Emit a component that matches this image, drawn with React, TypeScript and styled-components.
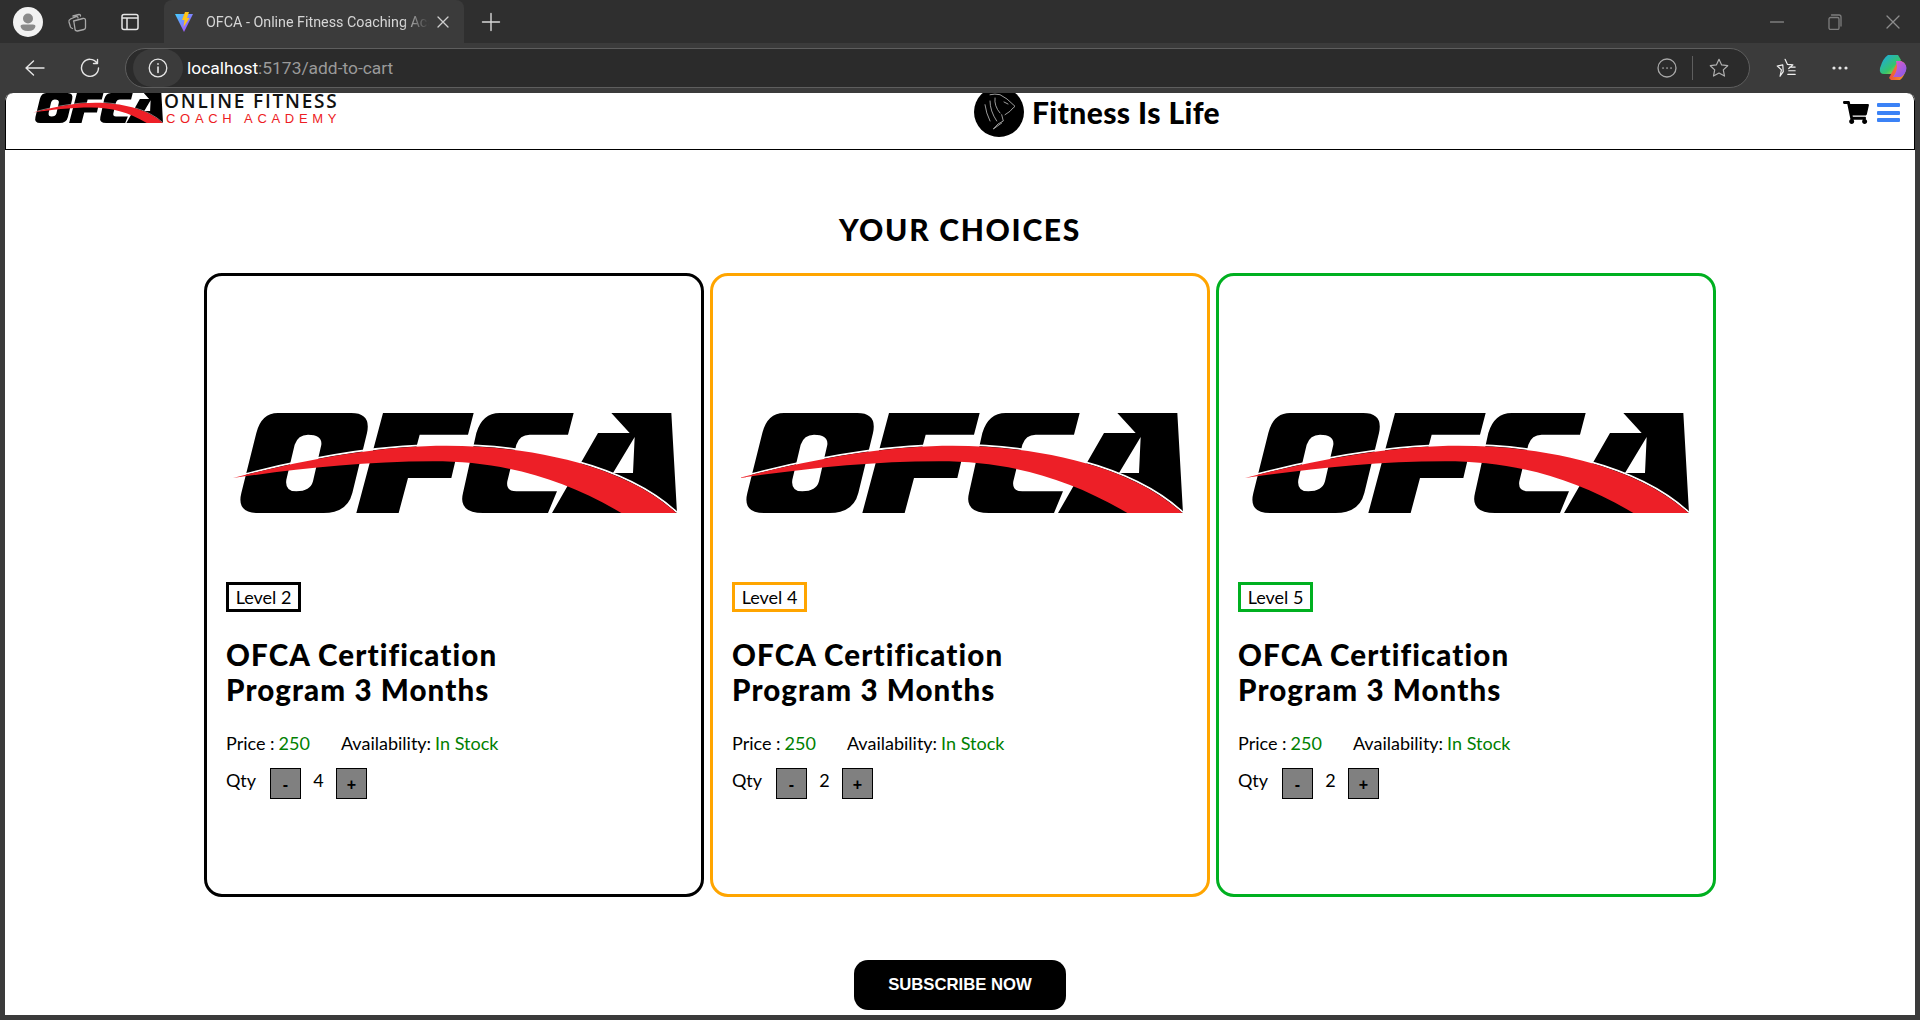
import React from "react";
import styled, { createGlobalStyle } from "styled-components";
import { FaShoppingCart } from "react-icons/fa";

const Global = createGlobalStyle`
  html, body { margin: 0; padding: 0; background: #3b3b3b; }
  body { width: 1920px; height: 1020px; overflow: hidden; font-family: "Lato", "Liberation Sans", sans-serif; }
`;

const Window = styled.div`
  width: 1920px; height: 1020px; display: flex; flex-direction: column; background: #3b3b3b; overflow: hidden;
`;
const TabStrip = styled.div`
  height: 43px; background: #2f2f2f; display: flex; align-items: center; flex: none; color: #d8d8d8;
`;
const Avatar = styled.div`
  width: 30px; height: 30px; border-radius: 50%; background: #f2f2f2; margin-left: 13px; display: flex; align-items: center; justify-content: center;
`;
const StripIcon = styled.div<{ $ml: number }>`
  margin-left: ${(p) => p.$ml}px; display: flex; align-items: center;
`;
const Tab = styled.div`
  margin-left: 24px; width: 300px; height: 43px; background: #3b3b3b; border-radius: 8px 8px 0 0; display: flex; align-items: center; padding: 0 10px; box-sizing: border-box;
`;
const TabTitle = styled.div`
  font-family: "Roboto", "Liberation Sans", sans-serif; font-size: 14.3px; color: #d6d6d6; margin-left: 12px; width: 223px; white-space: nowrap; overflow: hidden;
  mask-image: linear-gradient(to right, #000 88%, transparent 100%);
`;
const Spacer = styled.div`
  flex: 1;
`;
const WinButtons = styled.div`
  display: flex; align-items: center; gap: 44px; margin-right: 20px;
`;
const Toolbar = styled.div`
  height: 50px; flex: none; box-sizing: border-box; padding-bottom: 1px; display: flex; align-items: center; background: #3b3b3b;
`;
const NavIcon = styled.div<{ $ml: number }>`
  margin-left: ${(p) => p.$ml}px; display: flex; align-items: center;
`;
const AddressBar = styled.div`
  margin-left: 25px; width: 1625px; height: 40px; box-sizing: border-box; border: 1px solid #5e5e5e; border-radius: 20px; background: #2b2b2b; display: flex; align-items: center; padding-left: 7px;
`;
const InfoPill = styled.div`
  width: 50px; height: 38px; border-radius: 19px; background: #3b3b3b; display: flex; align-items: center; justify-content: center;
`;
const Url = styled.div`
  font-family: "Roboto", "Liberation Sans", sans-serif; font-size: 17.4px; color: #fff; margin-left: 4px;
  span { color: #9a9a9a; }
`;
const BarDivider = styled.div`
  width: 1px; height: 24px; background: #5e5e5e; margin: 0 15px;
`;
const BarEnd = styled.div`
  margin-left: auto; margin-right: 19px; display: flex; align-items: center;
`;

const Page = styled.div`
  width: 1910px; margin-left: 5px; height: 922px; flex: none; background: #fff; border-radius: 8px 8px 0 0; overflow: hidden; display: flex; flex-direction: column; position: relative;
`;
const Header = styled.header`
  height: 57px; flex: none; box-sizing: border-box; border: 1px solid #000; border-top: 0; border-radius: 8px 8px 0 0; display: flex; align-items: flex-start; position: relative; overflow: hidden;
`;
const Brand = styled.div`
  margin-left: 27px; display: flex; align-items: flex-start;
`;
const BrandText = styled.div`
  margin-left: 1px; display: flex; flex-direction: column;
`;
const BrandTop = styled.div`
  font-family: "Open Sans", "Liberation Sans", sans-serif; font-size: 19px; font-weight: 600; line-height: 16px; letter-spacing: 1.8px; color: #111; white-space: nowrap;
`;
const BrandBottom = styled.div`
  font-family: "Liberation Sans", sans-serif; font-size: 13px; line-height: 13px; letter-spacing: 4.7px; color: #ed1c24; white-space: nowrap; margin: 3px 0 0 2px;
`;
const Motto = styled.div`
  position: absolute; left: 968px; top: -6px; display: flex; align-items: center;
`;
const Badge = styled.div`
  width: 50px; height: 50px; border-radius: 50%; background: #000; display: flex; align-items: center; justify-content: center;
`;
const MottoText = styled.div`
  font-size: 30px; font-weight: 900; letter-spacing: 0.4px; color: #000; margin-left: 8px; line-height: 50px; white-space: nowrap;
`;
const HeaderIcons = styled.div`
  position: absolute; right: 14px; top: 8px; display: flex; align-items: center; gap: 8px;
`;
const Cart = styled(FaShoppingCart)`
  width: 26px; height: 23px; color: #000; display: block;
`;
const BurgerBox = styled.div`
  width: 23px; height: 19px; display: flex; flex-direction: column; justify-content: space-between;
`;
const BurgerBar = styled.span`
  display: block; height: 4px; border-radius: 1px; background: #3b82f6;
`;

const Main = styled.main`
  flex: 1; display: flex; flex-direction: column; align-items: center;
`;
const Heading = styled.h1`
  margin: 61px 0 0; font-size: 30px; line-height: 36px; font-weight: 900; color: #000; letter-spacing: 1.7px;
`;
const Cards = styled.div`
  margin-top: 26px; display: grid; grid-template-columns: repeat(3, 500px); gap: 6px;
`;
const Card = styled.article<{ $c: string }>`
  height: 624px; box-sizing: border-box; border: 3px solid ${(p) => p.$c}; border-radius: 18px; padding: 137px 19px 0;
`;
const LogoWrap = styled.div`
  height: 100px; margin-left: 7px;
`;
const Level = styled.div<{ $c: string }>`
  margin-top: 69px; width: 75px; height: 30px; box-sizing: border-box; border: 3px solid ${(p) => p.$c}; font-size: 18px; line-height: 24px; text-align: center; color: #000;
`;
const Title = styled.h2`
  margin: 25px 0 0; font-size: 29.5px; line-height: 35px; font-weight: 900; letter-spacing: 1.1px; color: #000;
`;
const Info = styled.div`
  margin-top: 24px; font-size: 18px; line-height: 24px; color: #000; display: flex; white-space: nowrap;
`;
const Green = styled.span`
  color: #008000; margin-left: 4px;
`;
const Avail = styled.span`
  margin-left: 31px;
`;
const QtyRow = styled.div`
  margin-top: 13px; display: flex; align-items: flex-start; font-size: 18px; line-height: 24px; color: #000;
`;
const QtyLabel = styled.span`
  width: 44px;
`;
const QtyBtn = styled.button`
  width: 31px; height: 31px; box-sizing: border-box; background: #808080; border: 1px solid #000; padding: 2px 0 0; font-family: "Liberation Sans", sans-serif; font-weight: 700; font-size: 16px; color: #000; display: flex; align-items: center; justify-content: center;
`;
const QtyVal = styled.span`
  width: 35px; text-align: center;
`;
const Subscribe = styled.button`
  margin-top: 63px; width: 212px; height: 50px; border: 0; border-radius: 14px; background: #000; color: #fff; font-family: "Liberation Sans", sans-serif; font-weight: 700; font-size: 16.7px;
`;

const Ofca = ({ w, h }: { w: number; h: number }) => (
  <svg width={w} height={h} viewBox="100 70 1332 300" preserveAspectRatio="none" style={{ display: "block" }}>
    <path fillRule="evenodd" fill="#000" d="M235 70 L455 70 Q515 70 502 130 L458 310 Q443 370 372 370 L175 370 Q110 370 125 310 L170 130 Q185 70 235 70 Z M325 135 Q368 135 365 165 L340 275 Q332 305 290 305 Q255 305 260 270 L285 165 Q295 135 325 135 Z" />
    <path fill="#000" d="M550 70 L822 70 L805 135 L660 135 L648 180 L775 180 L755 265 L625 265 L597 370 L470 370 Z" />
    <path fill="#000" d="M900 70 L1122 70 L1105 135 L990 135 Q960 135 950 165 L923 275 Q918 305 950 305 L1072 305 L1045 370 L850 370 Q775 370 790 310 L830 130 Q848 70 900 70 Z" />
    <path fillRule="evenodd" fill="#000" d="M1235 70 L1415 70 L1432 370 L1057 370 L1195 130 L1290 130 Z M1305 142 L1300 250 L1240 250 Z" />
    <path fill="none" stroke="#fff" strokeWidth="5" d="M130 255 C350 198 560 165 740 165 C1000 165 1280 227 1432 368" />
    <path fill="#ed1f27" d="M100 265 C350 200 560 168 740 168 C1000 168 1280 230 1430 370 L1265 370 C1080 260 900 215 700 215 C480 215 280 240 100 265 Z" />
  </svg>
);

const Lion = () => (
  <svg width="50" height="50" viewBox="0 0 50 50" fill="none" stroke="#c4c4c4" strokeWidth="0.8" strokeLinecap="round" strokeLinejoin="round">
    <path d="M16 7.7 Q21 6.5 26 7.7 L33 12 L41 19.3 L38 22 L36 24.3 L31 27.7" />
    <path d="M11 17.7 Q12 26 16 34 M16 14 Q16 24 22.7 34 M21 11 Q20 19 26 26" />
    <path d="M27.7 27.7 L29.3 34 L24 37 L19.3 42 L27.7 36" />
    <path d="M30 15 L34 17" />
  </svg>
);

const cards = [
  { c: "#000000", level: 2, qty: 4 },
  { c: "#ffa500", level: 4, qty: 2 },
  { c: "#00b020", level: 5, qty: 2 },
];

const Ic = { fill: "none", stroke: "#cfcfcf", strokeWidth: 1.3, strokeLinecap: "round", strokeLinejoin: "round" } as const;

export default function App() {
  return (
    <Window>
      <Global />
      <TabStrip>
        <Avatar>
          <svg width="22" height="22" viewBox="0 0 22 22">
            <circle cx="11" cy="7.5" r="5" fill="#8a8a8a" />
            <path d="M3.5 15 Q3.5 13.5 6 13.5 L16 13.5 Q18.5 13.5 18.5 15 Q18 20 11 20 Q4 20 3.5 15Z" fill="#8a8a8a" />
          </svg>
        </Avatar>
        <StripIcon $ml={23}>
          <svg width="22" height="22" viewBox="0 0 22 22" {...Ic} stroke="#a8a8a8">
            <path d="M7 5 L13 3.5 Q14.5 3.3 14.5 5 M4.5 8 L10 5.7 Q12 5 12 7 M7.5 10 L17 7.5 Q19.5 7 19.5 9.5 L19.5 16.5 Q19.5 18 18 18.5 L11.5 20 Q9 20 9 18 L8 11.5 Q8 10.5 7.5 10Z M4.5 8 Q2.5 9 3 11 L4.5 16 Q5 17 6.5 17.5" />
          </svg>
        </StripIcon>
        <StripIcon $ml={32}>
          <svg width="20" height="20" viewBox="0 0 20 20" {...Ic} stroke="#e6e6e6" strokeWidth="1.5">
            <rect x="2" y="2.5" width="16" height="15" rx="2" />
            <path d="M2.5 6 H17.5 M7 6 V17" />
          </svg>
        </StripIcon>
        <Tab>
          <svg width="20" height="22" viewBox="0 0 20 22" style={{ flex: "none" }}>
            <defs>
              <linearGradient id="vp" x1="0" y1="0" x2="1" y2="1">
                <stop offset="0" stopColor="#41d1ff" />
                <stop offset="1" stopColor="#bd34fe" />
              </linearGradient>
            </defs>
            <path d="M1 3 L19 3 L10 21 Z" fill="url(#vp)" />
            <path d="M11 1 L15 1 L13 7 L15.5 7 L9.5 16 L10.5 9 L8 9 Z" fill="#ffc517" />
          </svg>
          <TabTitle>OFCA - Online Fitness Coaching Academy</TabTitle>
          <svg width="12" height="12" viewBox="0 0 12 12" {...Ic} style={{ marginLeft: 8, flex: "none" }}>
            <path d="M1 1 L11 11 M11 1 L1 11" />
          </svg>
        </Tab>
        <StripIcon $ml={17}>
          <svg width="20" height="20" viewBox="0 0 20 20" {...Ic} stroke="#d8d8d8" strokeWidth="1.4">
            <path d="M10 1.5 V18.5 M1.5 10 H18.5" />
          </svg>
        </StripIcon>
        <Spacer />
        <WinButtons>
          <svg width="14" height="14" viewBox="0 0 14 14" {...Ic} stroke="#7d7d7d"><path d="M0.5 7 H13.5" /></svg>
          <svg width="14" height="16" viewBox="0 0 14 16" {...Ic} stroke="#7d7d7d"><rect x="1" y="3.5" width="10" height="12" rx="1.5" /><path d="M3.5 1 H11 Q13 1 13 3 V12" /></svg>
          <svg width="14" height="14" viewBox="0 0 14 14" {...Ic} stroke="#8d8d8d"><path d="M1 1 L13 13 M13 1 L1 13" /></svg>
        </WinButtons>
      </TabStrip>
      <Toolbar>
        <NavIcon $ml={25}>
          <svg width="20" height="20" viewBox="0 0 20 20" {...Ic} stroke="#e6e6e6" strokeWidth="1.4"><path d="M19 10 H1 M8.5 3 L1 10 L8.5 17" /></svg>
        </NavIcon>
        <NavIcon $ml={35}>
          <svg width="20" height="20" viewBox="0 0 20 20" {...Ic} stroke="#e6e6e6" strokeWidth="1.4"><path d="M17 5 A8.5 8.5 0 1 0 18.5 10 M17.5 1.5 V5.5 H13.5" /></svg>
        </NavIcon>
        <AddressBar>
          <InfoPill>
            <svg width="20" height="20" viewBox="0 0 20 20" {...Ic} stroke="#e6e6e6"><circle cx="10" cy="10" r="8.8" /><path d="M10 9 V14.5 M10 5.8 V6.2" strokeWidth="1.6" /></svg>
          </InfoPill>
          <Url>localhost<span>:5173/add-to-cart</span></Url>
          <BarEnd>
            <svg width="20" height="20" viewBox="0 0 20 20" {...Ic} stroke="#a8a8a8"><circle cx="10" cy="10" r="9" /><path d="M6 10 H6.1 M10 10 H10.1 M14 10 H14.1" strokeWidth="1.7" /></svg>
            <BarDivider />
            <svg width="22" height="22" viewBox="0 0 24 24" {...Ic} stroke="#b0b0b0"><path d="M12 2.5 L14.9 8.6 L21.5 9.5 L16.7 14 L18 20.8 L12 17.5 L6 20.8 L7.3 14 L2.5 9.5 L9.1 8.6 Z" /></svg>
          </BarEnd>
        </AddressBar>
        <NavIcon $ml={25}>
          <svg width="22" height="22" viewBox="0 0 24 24" {...Ic} stroke="#f0f0f0"><path d="M11 2.5 L13.5 8 L19.5 8.6 L15 12.6 M9 16 L5.5 21 L7 14 L2.5 9.8 L8.5 8.6 Z M16 11 H22 M15 15 H22 M14 19 H22" /></svg>
        </NavIcon>
        <NavIcon $ml={35}>
          <svg width="16" height="6" viewBox="0 0 16 6" fill="#e6e6e6"><circle cx="2" cy="3" r="1.6" /><circle cx="8" cy="3" r="1.6" /><circle cx="14" cy="3" r="1.6" /></svg>
        </NavIcon>
        <NavIcon $ml={31}>
          <svg width="28" height="28" viewBox="0 0 28 28">
            <defs>
              <linearGradient id="cp1" x1="0" y1="0" x2="1" y2="1"><stop offset="0" stopColor="#1aa7f0" /><stop offset="0.6" stopColor="#35c46c" /><stop offset="1" stopColor="#f2d21b" /></linearGradient>
              <linearGradient id="cp2" x1="0" y1="0" x2="1" y2="1"><stop offset="0" stopColor="#e85ac0" /><stop offset="1" stopColor="#7b5bf0" /></linearGradient>
              <linearGradient id="cp3" x1="0" y1="0" x2="1" y2="0"><stop offset="0" stopColor="#f0503a" /><stop offset="1" stopColor="#f2a02c" /></linearGradient>
            </defs>
            <path d="M9 1 H19 L22 6 L13 20 H5 Q0 20 1 14 Q4 4 9 1Z" fill="url(#cp1)" />
            <path d="M10 24 L19 7 H22 Q27 9 27 14 Q26 22 21 26 H12Z" fill="url(#cp3)" />
            <path d="M17 7 H22 Q27 9 27.5 14 Q27 20 22 23 H14 Q18 18 18 12Z" fill="url(#cp2)" />
          </svg>
        </NavIcon>
      </Toolbar>
      <Page>
        <Header>
          <Brand>
            <Ofca w={130} h={30} />
            <BrandText>
              <BrandTop>ONLINE FITNESS</BrandTop>
              <BrandBottom>COACH ACADEMY</BrandBottom>
            </BrandText>
          </Brand>
          <Motto>
            <Badge><Lion /></Badge>
            <MottoText>Fitness Is Life</MottoText>
          </Motto>
          <HeaderIcons>
            <Cart />
            <BurgerBox>
              <BurgerBar />
              <BurgerBar />
              <BurgerBar />
            </BurgerBox>
          </HeaderIcons>
        </Header>
        <Main>
          <Heading>YOUR CHOICES</Heading>
          <Cards>
            {cards.map((x) => (
              <Card key={x.level} $c={x.c}>
                <LogoWrap><Ofca w={444} h={100} /></LogoWrap>
                <Level $c={x.c}>Level {x.level}</Level>
                <Title>OFCA Certification<br />Program 3 Months</Title>
                <Info>
                  <span>Price :</span><Green>250</Green>
                  <Avail>Availability:</Avail><Green>In Stock</Green>
                </Info>
                <QtyRow>
                  <QtyLabel>Qty</QtyLabel>
                  <QtyBtn>-</QtyBtn>
                  <QtyVal>{x.qty}</QtyVal>
                  <QtyBtn>+</QtyBtn>
                </QtyRow>
              </Card>
            ))}
          </Cards>
          <Subscribe>SUBSCRIBE NOW</Subscribe>
        </Main>
      </Page>
    </Window>
  );
}
